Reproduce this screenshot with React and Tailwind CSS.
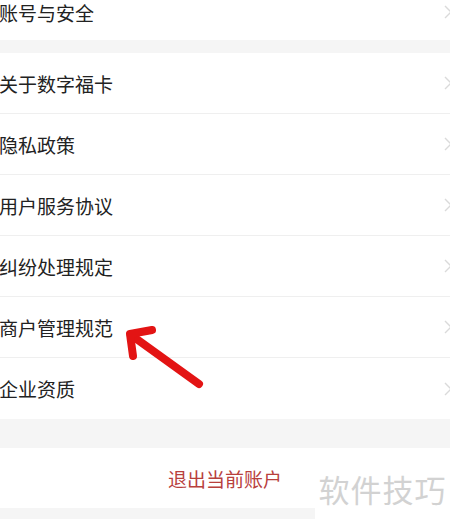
import React from "react";

const font = { fontFamily: '"Noto Sans CJK SC", "Noto Sans", sans-serif' };

function Chevron() {
  return (
    <svg width="10" height="16" viewBox="0 0 10 16" className="shrink-0">
      <path d="M2 2 L8 8 L2 14" fill="none" stroke="#dadada" strokeWidth="1.4" />
    </svg>
  );
}

function Row({ label, last }) {
  return (
    <div className={`flex items-center justify-between h-[61px] mr-[-3px] ${last ? "" : "border-b border-[#efefef]"}`}>
      <span className="text-[19px] text-[#222] leading-none ml-[-1px]">{label}</span>
      <Chevron />
    </div>
  );
}

export default function App() {
  const items = ["关于数字福卡", "隐私政策", "用户服务协议", "纠纷处理规定", "商户管理规范", "企业资质"];
  return (
    <div className="relative w-[450px] h-[519px] overflow-hidden bg-[#f5f5f5]" style={font}>
      <div className="bg-white h-[40px] flex items-center pb-[16px] justify-between mr-[-3px]">
        <span className="text-[19px] text-[#222] leading-none ml-[-1px]">账号与安全</span>
        <Chevron />
      </div>
      <div className="h-[13px]" />
      <div className="bg-white">
        {items.map((t, i) => (
          <Row key={t} label={t} last={i === items.length - 1} />
        ))}
      </div>
      <div className="h-[29px]" />
      <div className="bg-white h-[60px] flex items-center justify-center">
        <span className="text-[19px] text-[#b8403d] leading-none">退出当前账户</span>
      </div>

      <div className="absolute left-[315px] top-[458px] w-[135px] h-[61px] bg-white flex items-center justify-center">
        <span className="text-[31px] text-[#d2d2d2] leading-none tracking-[1px]">软件技巧</span>
      </div>

      <svg className="absolute left-0 top-0" width="450" height="519" viewBox="0 0 450 519">
        <g stroke="#e31414" strokeWidth="8" strokeLinecap="round" strokeLinejoin="round" fill="none">
          <path d="M131 335 L199 384" />
          <path d="M152 330 L130 334 L133 356" />
        </g>
      </svg>
    </div>
  );
}
